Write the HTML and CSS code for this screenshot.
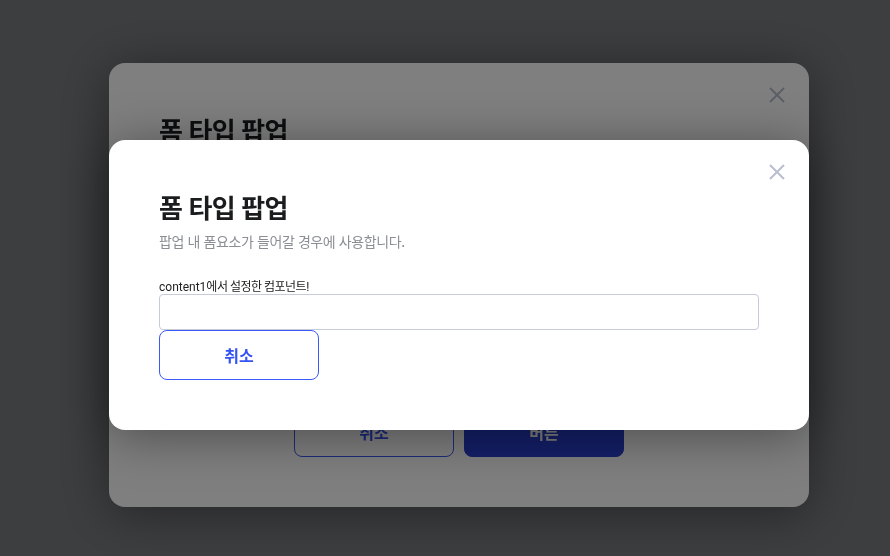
FILE: index.html
```html
<!DOCTYPE html>
<html lang="ko">
<head>
<meta charset="utf-8">
<title>폼 타입 팝업</title>
<link rel="stylesheet" href="styles.css">
</head>
<body>
<div class="dim">
  <div class="modal">
    <button class="close" aria-label="닫기">
      <svg width="16" height="16" viewBox="0 0 16 16"><path d="M1 1L15 15M15 1L1 15" stroke="currentColor" stroke-width="2" fill="none"/></svg>
    </button>
    <h2 class="title">폼 타입 팝업</h2>
    <p class="desc">팝업 내 폼요소가 들어갈 경우에 사용합니다.</p>
    <div class="content content-back"></div>
    <div class="footer">
      <button class="btn btn-line">취소</button>
      <button class="btn btn-fill">버튼</button>
    </div>
  </div>
</div>
<div class="dim dim-front">
  <div class="modal">
    <button class="close" aria-label="닫기">
      <svg width="16" height="16" viewBox="0 0 16 16"><path d="M1 1L15 15M15 1L1 15" stroke="currentColor" stroke-width="2" fill="none"/></svg>
    </button>
    <h2 class="title">폼 타입 팝업</h2>
    <p class="desc">팝업 내 폼요소가 들어갈 경우에 사용합니다.</p>
    <div class="content">
      <label class="label" for="f1">content1<span class="ko">에서 설정한 컴포넌트!</span></label>
      <input class="input" id="f1" type="text">
      <button class="btn btn-line">취소</button>
    </div>
  </div>
</div>
</body>
</html>
```
FILE: styles.css
```css
html, body {
  margin: 0;
  height: 100%;
}
body {
  background: #7a7c80;
  font-family: Roboto, "Noto Sans CJK KR", sans-serif;
  overflow: hidden;
}
.dim {
  position: fixed;
  inset: 0;
  display: flex;
  align-items: center;
  justify-content: center;
  padding: 14px 0 0 28px;
}
.dim-front {
  background: rgba(0, 0, 0, 0.5);
}
.modal {
  position: relative;
  width: 700px;
  box-sizing: border-box;
  padding: 50px;
  background: #fff;
  border-radius: 16px;
  box-shadow: 0 6px 50px rgba(0, 0, 0, 0.4);
}
.close {
  position: absolute;
  top: 24px;
  right: 24px;
  width: 16px;
  height: 16px;
  padding: 0;
  border: 0;
  background: none;
  color: #b9bfcf;
  display: flex;
}
.title {
  margin: 0;
  font-family: "Noto Sans CJK KR", sans-serif;
  font-size: 26px;
  font-weight: 700;
  line-height: 33px;
  letter-spacing: -0.8px;
  color: #1b1c1e;
}
.desc {
  margin: 8px 0 0;
  font-family: "Noto Sans CJK KR", sans-serif;
  font-size: 14px;
  line-height: 20px;
  letter-spacing: -0.4px;
  color: #8b8e94;
}
.content {
  margin-top: 29px;
}
.content-back {
  height: 204px;
}
.label {
  display: block;
  font-size: 12px;
  line-height: 14px;
  color: #222;
}
.label .ko {
  letter-spacing: -0.5px;
}
.input {
  display: block;
  width: 100%;
  height: 36px;
  box-sizing: border-box;
  border: 1px solid #c6cbd9;
  border-radius: 4px;
  margin: 0;
}
.btn {
  width: 160px;
  height: 50px;
  box-sizing: border-box;
  border-radius: 8px;
  font-family: "Noto Sans CJK KR", sans-serif;
  font-size: 16px;
  font-weight: 700;
  padding: 0;
}
.btn-line {
  display: block;
  border: 1px solid #3b59f6;
  background: #fff;
  color: #3453f2;
}
.btn-fill {
  border: 1px solid #283ed0;
  background: #283ed0;
  color: #fff;
}
.footer {
  display: flex;
  justify-content: center;
  gap: 10px;
}
```
